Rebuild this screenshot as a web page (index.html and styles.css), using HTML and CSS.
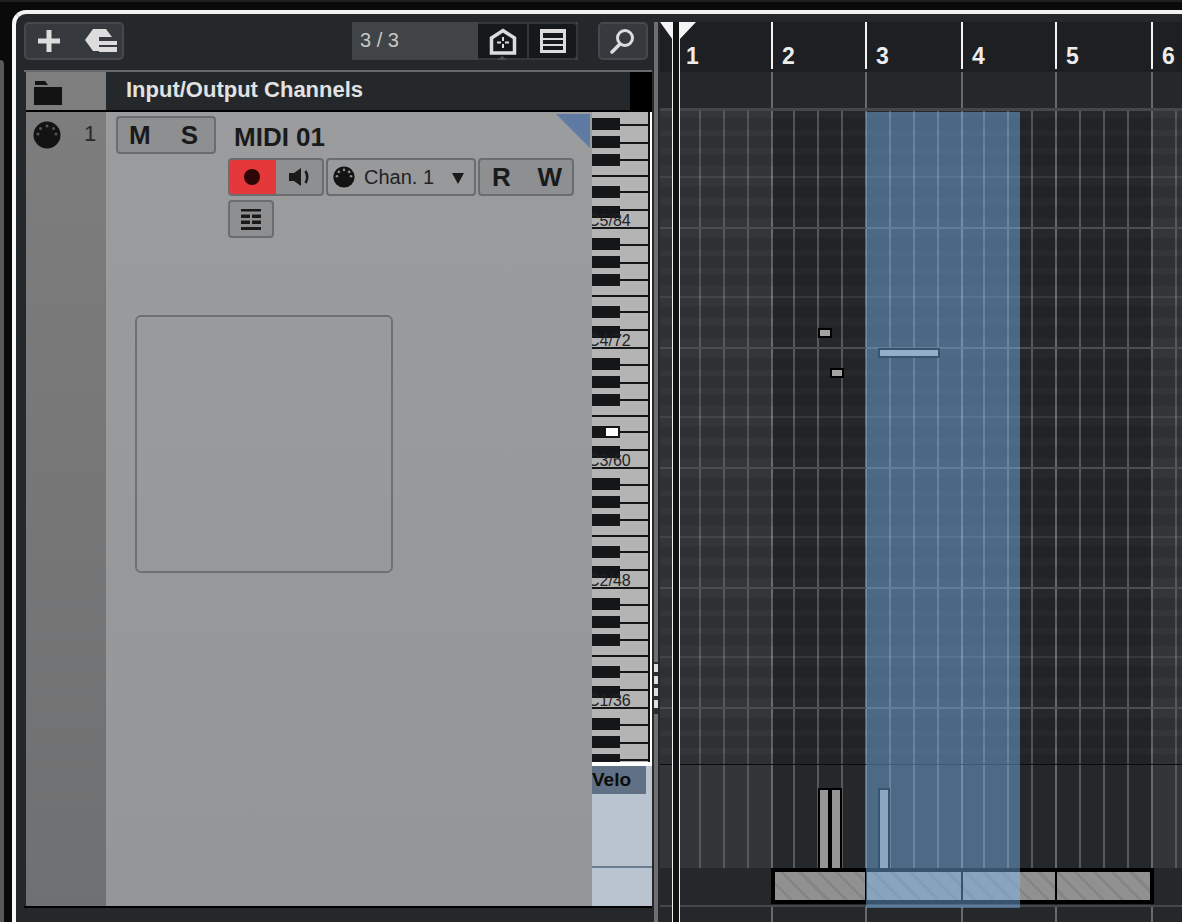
FILE: index.html
```html
<!DOCTYPE html>
<html lang="en">
<head>
    <meta charset="UTF-8">
    <meta name="viewport" content="width=device-width, initial-scale=1.0">
    <title>Key Editor</title>
    <link rel="stylesheet" href="styles.css">
</head>
<body>
    <div class="sliver"></div>
    <div class="window">
        <section class="inspector">
            <div class="toolbar">
                <div class="tool-group add-group">
                    <svg width="24" height="24" viewBox="0 0 24 24"><path d="M9.500 1h5v8.500H23v5h-8.500V23h-5v-8.500H1v-5h8.500z" fill="#dcdcdc"/></svg>
                    <svg width="34" height="26" viewBox="0 0 34 26"><path d="M1 12 9 1h13l6 8H15v14H9z" fill="#dcdcdc"/><path d="M15 13h18v4H15zM15 19h18v5H15z" fill="#dcdcdc"/></svg>
                </div>
                <div class="history">
                    <span class="history-count">3 / 3</span>
                    <button class="view-btn home-btn" aria-label="Home">
                        <svg width="28" height="27" viewBox="0 0 28 27"><path d="M2.500 25V10L14 2.500 25.500 10v15z" fill="none" stroke="#dcdcdc" stroke-width="3.500"/><path d="M13 9h2v4h-2zM13 16h2v4h-2zM8 13.500h4v2H8zM16 13.500h4v2h-4z" fill="#dcdcdc"/></svg>
                    </button>
                    <button class="view-btn list-btn" aria-label="List">
                        <svg width="28" height="26" viewBox="0 0 28 26"><path d="M1 1h26v24H1z" fill="#dcdcdc"/><path d="M4 5h20v5H4zM4 12h20v4H4zM4 18h20v4H4z" fill="#16191b"/></svg>
                    </button>
                </div>
                <button class="tool-group search-btn" aria-label="Search">
                    <svg width="26" height="26" viewBox="0 0 26 26"><circle cx="15" cy="10" r="7.500" fill="none" stroke="#dcdcdc" stroke-width="3"/><path d="M10 16 2 24" stroke="#dcdcdc" stroke-width="3.500" stroke-linecap="round"/></svg>
                </button>
            </div>

            <div class="channels">
                <div class="channels-head">
                    <div class="folder-cell">
                        <svg width="28" height="25" viewBox="0 0 28 25"><path d="M1 0h10l3 4H1zM0 6h28v18H0z" fill="#131313"/></svg>
                    </div>
                    <h1 class="channels-title">Input/Output Channels</h1>
                    <div class="channels-end"></div>
                </div>

                <div class="channels-body">
                    <div class="track-index">
                        <svg width="28" height="28" viewBox="0 0 28 28"><circle cx="14" cy="14" r="13.500" fill="#131313"/><g fill="#555"><circle cx="14" cy="5" r="1.500"/><circle cx="7.500" cy="7.500" r="1.500"/><circle cx="20.500" cy="7.500" r="1.500"/><circle cx="5" cy="13" r="1.500"/><circle cx="23" cy="13" r="1.500"/></g></svg>
                        <span class="track-number">1</span>
                    </div>

                    <div class="track">
                        <div class="track-head">
                            <div class="control ms">
                                <span class="letter">M</span>
                                <span class="letter">S</span>
                            </div>
                            <div class="track-main">
                                <h2 class="track-name">MIDI 01</h2>
                                <div class="track-controls">
                                    <div class="control rec-monitor">
                                        <span class="rec"><i class="rec-dot"></i></span>
                                        <span class="monitor">
                                            <svg width="22" height="18" viewBox="0 0 22 18"><path d="M0 5h5l7-5v18l-7-5H0z" fill="#1a1a1a"/><path d="M16.500 3q3.500 6 0 12" fill="none" stroke="#1a1a1a" stroke-width="2.500"/></svg>
                                        </span>
                                    </div>
                                    <div class="control chan">
                                        <svg width="22" height="22" viewBox="0 0 28 28"><circle cx="14" cy="14" r="13.500" fill="#131313"/><g fill="#8a8a8a"><circle cx="14" cy="5" r="1.700"/><circle cx="7.500" cy="7.500" r="1.700"/><circle cx="20.500" cy="7.500" r="1.700"/><circle cx="5" cy="13" r="1.700"/><circle cx="23" cy="13" r="1.700"/></g></svg>
                                        <span class="chan-label">Chan. 1</span>
                                        <svg class="chan-arrow" width="12" height="11" viewBox="0 0 12 11"><path d="M0 0h12L6 11z" fill="#1a1a1a"/></svg>
                                    </div>
                                    <div class="control ms rw">
                                        <span class="letter">R</span>
                                        <span class="letter">W</span>
                                    </div>
                                </div>
                                <div class="control lanes-btn">
                                    <svg width="20" height="21" viewBox="0 0 20 21"><path d="M0 0h20v2.500H0zM0 5.500h9V9H0zM11 5.500h9V9h-9zM0 11.500h9V15H0zM11 11.500h9V15h-9zM0 18h20v3H0z" fill="#1a1a1a"/></svg>
                                </div>
                            </div>
                        </div>
                        <div class="picture-slot"></div>
                    </div>

                    <div class="keys-column">
                        <div class="piano">
                            <div class="octave"><span class="octave-label">C5/84</span></div>
                            <div class="octave"><span class="octave-label">C4/72</span></div>
                            <div class="octave"><span class="octave-label">C3/60</span><i class="key-mark"></i></div>
                            <div class="octave"><span class="octave-label">C2/48</span></div>
                            <div class="octave"><span class="octave-label">C1/36</span></div>
                            <div class="octave"></div>
                        </div>
                        <div class="velo-lane">
                            <div class="velo-label">Velo</div>
                            <div class="velo-lower"></div>
                        </div>
                    </div>
                </div>
            </div>
        </section>

        <div class="splitter">
            <div class="grip"><span></span><span></span><span></span><span></span></div>
        </div>

        <section class="editor">
            <div class="ruler">
                <div class="ruler-cell first-cell">1</div>
                <div class="ruler-cell short-cell">2</div>
                <div class="ruler-cell long-cell">3</div>
                <div class="ruler-cell short-cell">4</div>
                <div class="ruler-cell long-cell">5</div>
                <div class="ruler-cell last-cell">6</div>
            </div>

            <div class="overview">
                <div class="tick first-cell"></div>
                <div class="tick short-cell"></div>
                <div class="tick long-cell"></div>
                <div class="tick short-cell"></div>
                <div class="tick long-cell"></div>
                <div class="tick last-cell"></div>
            </div>

            <div class="grid">
                <div class="bars">
                    <div class="bar outside first-cell"></div>
                    <div class="bar short-cell"></div>
                    <div class="bar long-cell"></div>
                    <div class="bar short-cell"></div>
                    <div class="bar long-cell"></div>
                    <div class="bar outside last-cell"></div>
                </div>
                <div class="pitch-rows">
                    <div class="note note-a"></div>
                    <div class="note note-b"></div>
                    <div class="note note-c"></div>
                </div>
                <div class="velocity velocity-a"></div>
                <div class="velocity velocity-b"></div>
                <div class="velocity velocity-c"></div>
            </div>

            <div class="part-row">
                <div class="part">
                    <span class="part-seg seg-a"></span>
                    <span class="part-seg seg-b"></span>
                    <span class="part-seg seg-c"></span>
                </div>
            </div>

            <div class="footer-ticks">
                <div class="tick first-cell"></div>
                <div class="tick short-cell"></div>
                <div class="tick long-cell"></div>
                <div class="tick short-cell"></div>
                <div class="tick long-cell"></div>
                <div class="tick last-cell"></div>
            </div>

            <div class="selection"></div>
            <div class="cursor"></div>
            <svg class="locators" width="36" height="18" viewBox="0 0 36 18"><path d="M0 0h13v18zM19 0h17L19 18z" fill="#f4f4f4"/></svg>
        </section>
    </div>
</body>
</html>
```

FILE: styles.css
```css
:root {
    --frame: #24282b;
    --control-border: #6b6c6d;
    --bar-line: #68696b;
    --beat-line: #58595b;
    --ink: #1a1a1a;
    --tool: #363a3e;
    --tool-border: #45494c;
    --row: rgba(0, 0, 0, 0.1);
}

* {
    margin: 0;
    padding: 0;
    box-sizing: border-box;
}

body {
    height: 922px;
    overflow: hidden;
    display: flex;
    align-items: flex-start;
    padding-top: 10px;
    background-color: #0a0a0a;
    border-top: 2px solid #1e2022;
    font-family: "Liberation Sans", Arial, sans-serif;
    color: var(--ink);
}

.sliver {
    width: 4px;
    height: 862px;
    margin-top: 48px;
    margin-right: 8px;
    background-color: #58595d;
    border-top-right-radius: 6px;
}

.window {
    flex: 1;
    height: 912px;
    margin-top: -2px;
    display: flex;
    background-color: var(--frame);
    border-top: 4px solid #f2f2f2;
    border-left: 4px solid #f8f8f8;
    border-top-left-radius: 14px;
}

/* left side */
.inspector {
    width: 638px;
    display: flex;
    flex-direction: column;
}

.toolbar {
    height: 56px;
    padding: 8px 6px 8px 8px;
    display: flex;
    align-items: flex-start;
}

.tool-group {
    height: 38px;
    background-color: var(--tool);
    border: 2px solid var(--tool-border);
    border-radius: 5px;
    display: flex;
    align-items: center;
}

.add-group {
    width: 100px;
    padding-left: 11px;
    gap: 23px;
}

.history {
    height: 38px;
    width: 226px;
    margin-left: 228px;
    display: flex;
    background-color: #404447;
}

.history-count {
    width: 126px;
    padding-left: 8px;
    font-size: 20px;
    line-height: 36px;
    color: #c8c8c8;
}

.view-btn {
    position: relative;
    display: flex;
    align-items: center;
    justify-content: center;
    background-color: #16191b;
    border: 2px solid #33373a;
}

.home-btn {
    width: 49px;
    border-right: none;
    border-left: none;
}

.home-btn::after {
    content: "";
    position: absolute;
    left: 19px;
    bottom: -2px;
    width: 10px;
    height: 4px;
    background-color: #4a4e51;
    clip-path: polygon(50% 0, 100% 100%, 0 100%);
}

.list-btn {
    width: 51px;
    border-radius: 0 5px 5px 0;
}

.search-btn {
    width: 50px;
    margin-left: 20px;
    justify-content: center;
}

.channels {
    flex: 1;
    margin-left: 8px;
    margin-right: 2px;
    display: flex;
    flex-direction: column;
    border-top: 2px solid #6a6a6a;
}

.channels-head {
    height: 40px;
    margin-left: 2px;
    display: flex;
    background-color: #000;
    border-bottom: 2px solid #000;
}

.folder-cell {
    width: 80px;
    padding: 9px 0 0 8px;
    background-color: #7e7e7f;
}

.channels-title {
    width: 524px;
    padding-left: 20px;
    font-size: 22px;
    line-height: 36px;
    font-weight: bold;
    color: #e2e2e2;
    background-color: var(--frame);
}

.channels-end {
    flex: 1;
}

.channels-body {
    height: 794px;
    margin-left: 2px;
    display: flex;
    position: relative;
}

.channels-body::after {
    content: "";
    position: absolute;
    left: -2px;
    right: 0;
    bottom: -2px;
    height: 2px;
    background-color: #000;
}

.track-index {
    width: 80px;
    padding: 9px 0 0 7px;
    display: flex;
    align-items: flex-start;
    background: linear-gradient(#7d7d7e, #6f7071);
}

.track-number {
    margin-left: 23px;
    font-size: 22px;
    line-height: 26px;
    color: #2a2a2a;
}

.track {
    position: relative;
    width: 486px;
    padding: 4px 0 0 10px;
    background: linear-gradient(#9b9c9d, #959697);
}

.track::after {
    content: "";
    position: absolute;
    top: 2px;
    right: 2px;
    width: 34px;
    height: 34px;
    background-color: #5f7ba3;
    clip-path: polygon(0 0, 100% 0, 100% 100%);
}

.track-head {
    display: flex;
    align-items: flex-start;
}

.control {
    height: 38px;
    display: flex;
    align-items: center;
    background-color: #8e8f90;
    border: 2px solid var(--control-border);
    border-radius: 4px;
}

.ms {
    width: 100px;
    padding: 0 16px 0 11px;
    justify-content: space-between;
}

.ms.rw {
    width: 96px;
    padding: 0 10px 0 12px;
}

.letter {
    font-size: 26px;
    font-weight: bold;
}

.track-main {
    margin-left: 12px;
}

.track-name {
    height: 42px;
    padding-left: 6px;
    font-size: 26px;
    line-height: 42px;
    font-weight: bold;
}

.track-controls {
    display: flex;
    gap: 2px;
}

.rec-monitor {
    width: 96px;
    overflow: hidden;
}

.rec {
    width: 46px;
    height: 100%;
    padding-right: 3px;
    display: flex;
    align-items: center;
    justify-content: center;
    background-color: #e5383b;
}

.rec-dot {
    width: 16px;
    height: 16px;
    border-radius: 50%;
    background-color: #2e0606;
}

.monitor {
    flex: 1;
    padding-left: 13px;
    display: flex;
}

.chan {
    width: 150px;
    padding-left: 5px;
    background-color: #98999a;
}

.chan-label {
    margin-left: 9px;
    font-size: 20px;
    color: #222;
}

.chan-arrow {
    margin: 3px 0 0 18px;
}

.lanes-btn {
    width: 46px;
    margin-top: 4px;
    justify-content: center;
}

.picture-slot {
    width: 258px;
    height: 258px;
    margin: 77px 0 0 19px;
    border: 2px solid #6f7071;
    border-radius: 6px;
}

/* piano and velocity label */
.keys-column {
    flex: 1;
    display: flex;
    flex-direction: column;
}

.piano {
    height: 650px;
    overflow: hidden;
    border-right: 2px solid #fff;
}

.octave {
    position: relative;
    height: 120px;
    display: flex;
    align-items: flex-end;
    overflow: hidden;
    border-right: 2px solid #111;
    background-color: #b4b4b5;
    background-image:
        linear-gradient(to bottom,
            transparent 10px, #151618 10px, #151618 22px,
            transparent 22px, transparent 28px, #151618 28px, #151618 40px,
            transparent 40px, transparent 46px, #151618 46px, #151618 58px,
            transparent 58px, transparent 78px, #151618 78px, #151618 90px,
            transparent 90px, transparent 98px, #151618 98px, #151618 110px,
            transparent 110px),
        linear-gradient(to bottom,
            #151618 1px, transparent 1px,
            transparent 16px, #151618 16px, #151618 18px,
            transparent 18px, transparent 34px, #151618 34px, #151618 36px,
            transparent 36px, transparent 51px, #151618 51px, #151618 53px,
            transparent 53px, transparent 67px, #151618 67px, #151618 69px,
            transparent 69px, transparent 83px, #151618 83px, #151618 85px,
            transparent 85px, transparent 101px, #151618 101px, #151618 103px,
            transparent 103px, transparent 119px, #151618 119px);
    background-size: 28px 100%, 100% 100%;
    background-repeat: no-repeat;
}

.octave:first-child {
    margin-top: -4px;
}

.octave-label {
    margin-left: -4px;
    font-size: 16px;
    line-height: 14px;
    color: #222;
}

.key-mark {
    position: absolute;
    left: 14px;
    top: 80px;
    width: 12px;
    height: 8px;
    background-color: #fff;
}

.velo-lane {
    flex: 1;
    display: flex;
    flex-direction: column;
    background-color: #b9c4d0;
    border-top: 4px solid #fff;
}

.velo-label {
    width: 54px;
    height: 28px;
    font-size: 19px;
    line-height: 28px;
    font-weight: bold;
    color: #0c0c0c;
    background-color: #617185;
}

.velo-lower {
    flex: 1;
    margin-top: 72px;
    border-top: 2px solid #6a7d92;
}

/* divider between the panes */
.splitter {
    width: 4px;
    margin: 8px 2px 0 0;
    background-color: #6f6f70;
}

.grip {
    height: 52px;
    margin-top: 640px;
    padding: 2px 0;
    display: flex;
    flex-direction: column;
    gap: 4px;
    background-color: #2a2e30;
}

.grip span {
    height: 8px;
    background-color: #dedede;
}

/* right side */
.editor {
    position: relative;
    flex: 1;
    margin-top: 8px;
    display: flex;
    flex-direction: column;
    overflow: hidden;
}

.first-cell { width: 111px; }
.short-cell { width: 94px; }
.long-cell { width: 96px; }
.last-cell { flex: 1; }

.ruler {
    height: 50px;
    display: flex;
    background-color: #1d1f22;
}

.ruler-cell {
    padding: 22px 0 0 11px;
    font-size: 23px;
    line-height: 24px;
    font-weight: bold;
    color: #ececec;
    background: linear-gradient(#f2f2f2, #f2f2f2) 0 0 / 2px 47px no-repeat;
}

.ruler-cell.first-cell {
    padding-left: 26px;
    background: none;
}

.overview {
    height: 39px;
    display: flex;
    border-bottom: 3px solid #45484b;
}

.tick {
    background: linear-gradient(var(--bar-line), var(--bar-line)) 0 0 / 2px 100% no-repeat;
}

.tick.first-cell {
    background: none;
}

.grid {
    position: relative;
    height: 757px;
}

.bars {
    height: 100%;
    display: flex;
}

.bar {
    --cell: #25282b;
    background-color: var(--cell);
    background-image:
        linear-gradient(var(--bar-line), var(--bar-line)),
        linear-gradient(to right, var(--beat-line) 2px, transparent 2px);
    background-size: 2px 100%, 24px 100%;
    background-repeat: no-repeat, repeat-x;
    background-position: 0 0, 0 0;
}

.bar.short-cell {
    background-position: 0 0, 22px 0;
}

.bar.outside {
    --cell: #333539;
}

.bar.first-cell {
    background-image: linear-gradient(to right, var(--beat-line) 2px, transparent 2px);
    background-size: 24px 100%;
    background-repeat: repeat-x;
    background-position: 15px 0;
}

.pitch-rows {
    position: absolute;
    top: 0;
    left: 0;
    right: 0;
    height: 654px;
    border-bottom: 1px solid #0c0c0c;
    background-image: linear-gradient(to bottom,
        #4b4d50 2px, transparent 2px,
        transparent 11px, var(--row) 11px, var(--row) 23px,
        transparent 23px, transparent 29px, var(--row) 29px, var(--row) 41px,
        transparent 41px, transparent 47px, var(--row) 47px, var(--row) 59px,
        transparent 59px, transparent 69px, rgba(255, 255, 255, 0.08) 69px, rgba(255, 255, 255, 0.08) 71px,
        transparent 71px, transparent 79px, var(--row) 79px, var(--row) 91px,
        transparent 91px, transparent 99px, var(--row) 99px, var(--row) 111px,
        transparent 111px);
    background-size: 100% 120px;
    background-position: 0 -4px;
}

.note,
.velocity {
    position: absolute;
    background-color: #a2a2a2;
    border: 2px solid #000;
}

.note {
    height: 10px;
}

.note-a { left: 158px; top: 217px; width: 14px; }
.note-b { left: 170px; top: 257px; width: 14px; }
.note-c { left: 218px; top: 237px; width: 62px; }

.velocity {
    top: 677px;
    bottom: 0;
    width: 12px;
    border-bottom: none;
    background-color: #959595;
}

.velocity-a { left: 158px; }
.velocity-b { left: 170px; }
.velocity-c { left: 218px; }

.part-row {
    height: 38px;
    padding-left: 111px;
    background-color: var(--frame);
}

.part {
    width: 383px;
    height: 36px;
    display: flex;
    border: 4px solid #000;
    background: repeating-linear-gradient(45deg, #919191 0, #919191 10px, #858585 10px, #858585 13px);
}

.part-seg {
    border-right: 2px solid #000;
}

.seg-a { width: 92px; }
.seg-b { width: 96px; }
.seg-c { width: 94px; }

.footer-ticks {
    flex: 1;
    display: flex;
    border-top: 2px solid #45484b;
    margin-top: -1px;
}

.selection {
    position: absolute;
    top: 90px;
    left: 206px;
    width: 154px;
    height: 796px;
    background-color: rgba(127, 189, 250, 0.44);
}

.cursor {
    position: absolute;
    top: 0;
    bottom: 0;
    left: 12px;
    width: 8px;
    background-color: #0f1312;
    border-left: 1px solid #f0f0f0;
    border-right: 1px solid #f0f0f0;
}

.locators {
    position: absolute;
    top: 0;
    left: 0;
    width: 36px;
    height: 18px;
}
```
